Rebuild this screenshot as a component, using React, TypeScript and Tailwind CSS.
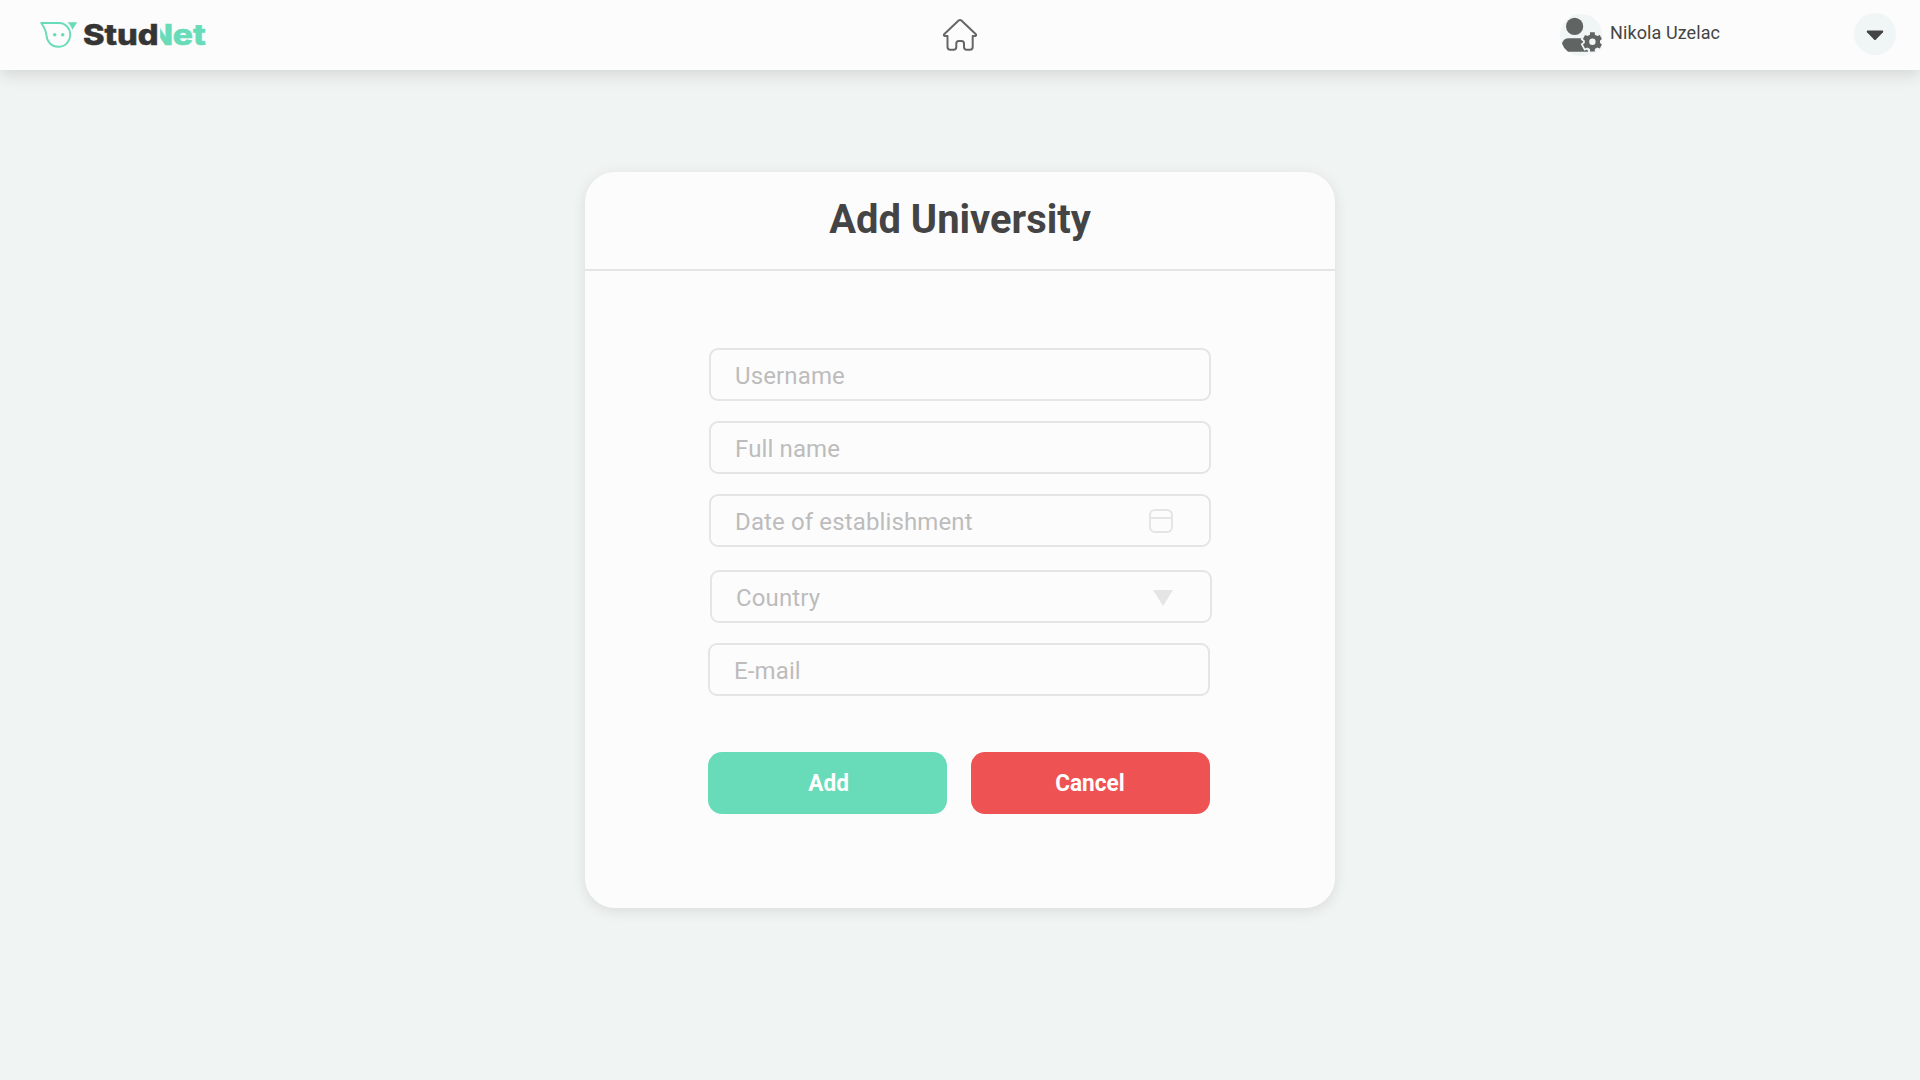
import type { ReactNode } from 'react';

const Logo = () => (
  <svg width="180" height="44" viewBox="36 13 180 44" className="block">
    <defs>
      <clipPath id="n-cut">
        <path d="M160.2 22 L160.2 46 L180 46 L180 22 Z" />
      </clipPath>
    </defs>
    <path
      d="M41.2 23 H59 C66 23 70.2 29 70.2 34.6 C70.2 41.6 65 46.8 58.3 46.8 C51.6 46.8 46.9 42 46.4 35 C46 29.8 43.6 26.4 41.2 23 Z"
      fill="none"
      stroke="#68dcb8"
      strokeWidth="1.9"
      strokeLinejoin="round"
    />
    <circle cx="54.7" cy="34.8" r="1.8" fill="#68dcb8" />
    <circle cx="62.7" cy="34.8" r="1.8" fill="#68dcb8" />
    <path d="M67.5 22.2 H77.2 L72.3 30 C71.5 27 69.8 24.2 67.5 22.2 Z" fill="#68dcb8" />
    <g fontFamily="Inter, sans-serif" fontWeight="800" fontSize="28.5" strokeWidth="0.5">
      <text x="83" y="44.8" fill="#353535" stroke="#353535" textLength="75.6" lengthAdjust="spacingAndGlyphs">Stud</text>
      <text x="149" y="44.8" fill="#68dcb8" stroke="#68dcb8" textLength="24" lengthAdjust="spacingAndGlyphs" clipPath="url(#n-cut)">N</text>
      <text x="172.8" y="44.8" fill="#68dcb8" stroke="#68dcb8" textLength="33" lengthAdjust="spacingAndGlyphs">et</text>
    </g>
  </svg>
);

const HomeIcon = () => (
  <svg width="36" height="34" viewBox="942 18 36 34" fill="none" stroke="#666" strokeWidth="2" strokeLinejoin="round" strokeLinecap="round" className="block">
    <path d="M947.5 36 H944.6 Q943.2 35.2 944.4 34 L958.6 20.6 Q960 19.4 961.4 20.6 L975.6 34 Q976.8 35.2 975.4 36 H972.7 V47 Q972.7 49.7 970 49.7 H966.6 Q964 49.7 964 47 V43.5 Q964 41 961.5 41 H958.8 Q956.3 41 956.3 43.5 V47 Q956.3 49.7 953.6 49.7 H950.2 Q947.5 49.7 947.5 47 Z" />
  </svg>
);

const UserGearIcon = () => (
  <svg width="42" height="42" viewBox="1560 14 42 42" className="block">
    <circle cx="1574.6" cy="26.4" r="8.6" fill="#606462" />
    <path d="M1569 38.2 H1580 Q1583 38.2 1585 40 L1588 51.8 H1568 Q1563.6 48.4 1562 43.4 Q1563.4 38.2 1569 38.2 Z" fill="#606462" />
    <g transform="translate(1592.4 41.8)">
      <path
        fill="#606462"
        stroke="#f0f5f5"
        strokeWidth="3.4"
        paintOrder="stroke"
        d="M-2.4 -9.6 H2.4 V-7.1 L5 -5.7 L7.3 -6.8 L9.5 -2.7 L7.6 -1.2 V1.2 L9.5 2.7 L7.3 6.8 L5 5.7 L2.4 7.1 V9.6 H-2.4 V7.1 L-5 5.7 L-7.3 6.8 L-9.5 2.7 L-7.6 1.2 V-1.2 L-9.5 -2.7 L-7.3 -6.8 L-5 -5.7 L-2.4 -7.1 Z"
      />
      <circle r="3.2" fill="#f0f5f5" />
    </g>
  </svg>
);

const Field = ({ label, className = '', children }: { label: string; className?: string; children?: ReactNode }) => (
  <div className={`flex h-[53px] w-[502px] items-center justify-between rounded-[9px] border-2 border-[#e5e5e5] pl-6 text-[24px] leading-none tracking-[0.13px] text-[#bcbcbc] ${className}`}>
    <span className="pt-[3px]">{label}</span>
    {children}
  </div>
);

export default function App() {
  return (
    <div className="flex h-[1080px] w-[1920px] flex-col overflow-hidden bg-[#f0f4f3] font-['Roboto',sans-serif]">
      <header className="grid h-[70px] shrink-0 grid-cols-3 bg-[#fcfcfc] shadow-[0_4px_16px_rgba(0,0,0,0.13)]">
        <div className="pt-[13px] pl-9">
          <Logo />
        </div>
        <div className="flex justify-center pt-[18px]">
          <HomeIcon />
        </div>
        <div className="flex items-start pt-[13px] pr-6 pl-[280px]">
          <div className="mt-px rounded-full bg-[#f0f5f5]">
            <UserGearIcon />
          </div>
          <span className="mt-[6px] ml-2 text-[18px] leading-[28px] tracking-[0.1px] text-[#444]">Nikola Uzelac</span>
          <button className="ml-auto flex size-[42px] items-center justify-center rounded-full bg-[#f0f5f5]">
            <svg width="18" height="11" viewBox="0 0 18 11" className="mt-[2px]">
              <path d="M1.4 0.5 H16.6 Q17.8 1 17 2.2 L10 9.6 Q9 10.6 8 9.6 L1 2.2 Q0.2 1 1.4 0.5 Z" fill="#444" />
            </svg>
          </button>
        </div>
      </header>

      <main className="mt-[102px] ml-[585px] h-[736px] w-[750px] rounded-[30px] bg-[#fcfcfc] shadow-[0_3px_14px_rgba(0,0,0,0.1)]">
        <div className="h-[99px] border-b-2 border-[#e5e5e5] pt-[23px] text-center text-[41px] leading-[48px] font-bold text-[#444]">
          <h1 className="scale-x-[0.973]">Add University</h1>
        </div>
        <form className="flex flex-col pt-[77px] pl-[123px]">
          <Field label="Username" className="ml-px" />
          <Field label="Full name" className="mt-5 ml-px" />
          <Field label="Date of establishment" className="mt-5 ml-px">
            <svg width="24" height="24" viewBox="0 0 24 24" fill="none" stroke="#e5e5e5" strokeWidth="2" className="mr-[36px]">
              <rect x="1" y="1" width="22" height="22" rx="5" />
              <path d="M1 9 H23" />
            </svg>
          </Field>
          <Field label="Country" className="mt-[23px] ml-0.5">
            <svg width="20" height="16" viewBox="0 0 20 16" className="mt-[2px] mr-[37px]">
              <path d="M0 0 H20 L10 16 Z" fill="#e5e5e5" />
            </svg>
          </Field>
          <Field label="E-mail" className="mt-5" />
          <div className="mt-14 flex gap-6 text-[24px] leading-none font-bold text-white">
            <button type="button" className="h-[61.5px] w-[239px] rounded-[14px] bg-[#68dcb8] pl-[3px]">
              <span className="inline-block scale-x-[0.94]">Add</span>
            </button>
            <button type="button" className="h-[61.5px] w-[239px] rounded-[14px] bg-[#ef5253] pr-[2px]">
              <span className="inline-block scale-x-[0.94]">Cancel</span>
            </button>
          </div>
        </form>
      </main>
    </div>
  );
}
